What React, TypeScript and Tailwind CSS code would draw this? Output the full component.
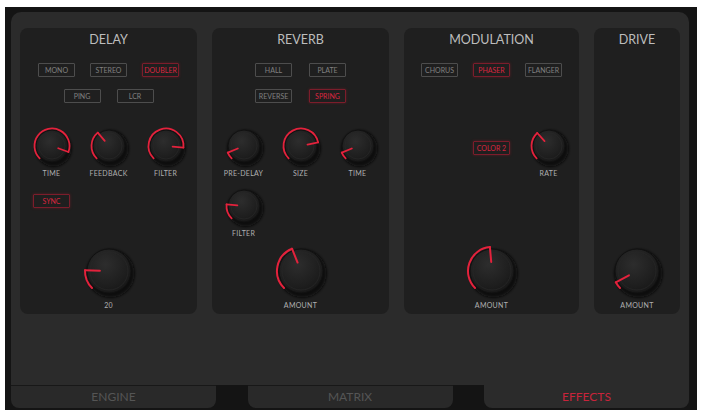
import React from 'react';

const RED = '#e3223c';

// angle in degrees, clockwise from 12 o'clock
const pt = (c: number, r: number, a: number) => {
  const rad = (a * Math.PI) / 180;
  return [c + r * Math.sin(rad), c - r * Math.cos(rad)];
};

const Knob: React.FC<{ value: number; big?: boolean }> = ({ value, big }) => {
  const S = big ? 56 : 40;
  const c = S / 2;
  const r = big ? 24 : 17.5;
  const br = big ? 22 : 16;
  const start = -135;
  const [x0, y0] = pt(c, r, start);
  const [x1, y1] = pt(c, r, value);
  const large = value - start > 180 ? 1 : 0;
  const [px0, py0] = pt(c, r * 0.38, value);
  return (
    <svg width={S} height={S} viewBox={`0 0 ${S} ${S}`} className="overflow-visible block">
      <circle cx={c + 1.5} cy={c + 2.5} r={br + 2} fill="#0a0a0a" filter="url(#knobShadow)" />
      <circle cx={c} cy={c} r={br} fill="url(#knobBody)" stroke="#111111" strokeWidth={1} />
      <circle cx={c} cy={c} r={br - 3} fill="none" stroke="#272727" strokeWidth={0.8} />
      <path
        d={`M ${x0} ${y0} A ${r} ${r} 0 ${large} 1 ${x1} ${y1}`}
        fill="none"
        stroke={RED}
        strokeWidth={big ? 2 : 1.8}
        strokeLinecap="round"
      />
      <line x1={px0} y1={py0} x2={x1} y2={y1} stroke={RED} strokeWidth={big ? 2 : 1.8} strokeLinecap="round" />
    </svg>
  );
};

const KnobCell: React.FC<{ label: string; value: number }> = ({ label, value }) => (
  <div className="flex flex-col items-center">
    <Knob value={value} />
    <div className="mt-[3px] h-[8px] text-[7px] leading-[8px] text-[#b0b0b0] tracking-[0.3px]">{label}</div>
  </div>
);

const BigKnob: React.FC<{ label: string; value: number }> = ({ label, value }) => (
  <div className="mt-auto flex flex-col items-center pb-[5px]">
    <Knob value={value} big />
    <div className="mt-[2px] h-[8px] text-[7px] leading-[8px] text-[#b0b0b0] tracking-[0.3px]">{label}</div>
  </div>
);

const Btn: React.FC<{ label: string; active?: boolean }> = ({ label, active }) => (
  <div
    className={
      active
        ? 'w-[37px] h-[14px] flex items-center justify-center border border-[#7c1d2b] rounded-[1px] text-[7px] leading-none text-[#d9263f] shadow-[0_0_3px_rgba(200,30,50,0.35)]'
        : 'w-[37px] h-[14px] flex items-center justify-center border border-[#4d4d4d] rounded-[1px] text-[7px] leading-none text-[#808080]'
    }
  >
    {label}
  </div>
);

const Title: React.FC<{ children: React.ReactNode }> = ({ children }) => (
  <div className="h-[14px] text-[12.5px] leading-[14px] text-[#bdbdbd]">{children}</div>
);

const Tab: React.FC<{ label: string; active?: boolean }> = ({ label, active }) => (
  <div
    className={
      active
        ? 'w-[205px] h-[23px] rounded-b-[8px] bg-[#2b2b2b] flex items-center justify-center text-[12px] text-[#c8243b]'
        : 'w-[205px] h-[23px] rounded-b-[8px] bg-[#292929] border-t border-[#181818] flex items-center justify-center text-[12px] text-[#555555]'
    }
  >
    {label}
  </div>
);

export default function App() {
  return (
    <div className="w-[702px] h-[416px] bg-white overflow-hidden font-['Lato',sans-serif]">
      <div className="h-0 overflow-hidden">
        <svg width="0" height="0">
          <defs>
            <radialGradient id="knobBody" cx="42%" cy="35%" r="70%">
              <stop offset="0%" stopColor="#2d2d2d" />
              <stop offset="70%" stopColor="#1e1e1e" />
              <stop offset="100%" stopColor="#161616" />
            </radialGradient>
            <filter id="knobShadow" x="-50%" y="-50%" width="200%" height="200%">
              <feGaussianBlur stdDeviation="1.6" />
            </filter>
          </defs>
        </svg>
      </div>

      <div className="mt-[7px] ml-[5px] w-[692px] h-[403px] bg-[#141414] pl-[6px] pt-[5px] flex flex-col">
        {/* Effects panel */}
        <div className="w-[678px] h-[373px] bg-[#2b2b2b] rounded-t-[10px] px-[9px] pt-[16px] flex gap-[15px]">
          {/* DELAY */}
          <div className="w-[177px] h-[286px] bg-[#1f1f1f] rounded-[8px] flex flex-col items-center pt-[5px]">
            <Title>DELAY</Title>
            <div className="mt-[16px] h-[40px] flex flex-col items-center gap-[12px]">
              <div className="flex gap-[15px]">
                <Btn label="MONO" />
                <Btn label="STEREO" />
                <Btn label="DOUBLER" active />
              </div>
              <div className="flex gap-[16px]">
                <Btn label="PING" />
                <Btn label="LCR" />
              </div>
            </div>
            <div className="mt-[23px] grid grid-cols-[57px_57px_57px] justify-items-center">
              <KnobCell label="TIME" value={110} />
              <KnobCell label="FEEDBACK" value={-40} />
              <KnobCell label="FILTER" value={95} />
              <div className="mt-[17px]">
                <Btn label="SYNC" active />
              </div>
            </div>
            <BigKnob label="20" value={-88} />
          </div>

          {/* REVERB */}
          <div className="w-[177px] h-[286px] bg-[#1f1f1f] rounded-[8px] flex flex-col items-center pt-[5px]">
            <Title>REVERB</Title>
            <div className="mt-[16px] h-[40px] flex flex-col items-center gap-[12px]">
              <div className="flex gap-[17px]">
                <Btn label="HALL" />
                <Btn label="PLATE" />
              </div>
              <div className="flex gap-[17px]">
                <Btn label="REVERSE" />
                <Btn label="SPRING" active />
              </div>
            </div>
            <div className="mt-[23px] grid grid-cols-[57px_57px_57px] justify-items-center">
              <KnobCell label="PRE-DELAY" value={-112} />
              <KnobCell label="SIZE" value={78} />
              <KnobCell label="TIME" value={-112} />
              <div className="mt-[9px]">
                <KnobCell label="FILTER" value={-85} />
              </div>
            </div>
            <BigKnob label="AMOUNT" value={-22} />
          </div>

          {/* MODULATION */}
          <div className="w-[175px] h-[286px] bg-[#1f1f1f] rounded-[8px] flex flex-col items-center pt-[5px]">
            <Title>MODULATION</Title>
            <div className="mt-[16px] h-[40px] flex flex-col items-center">
              <div className="flex gap-[15px]">
                <Btn label="CHORUS" />
                <Btn label="PHASER" active />
                <Btn label="FLANGER" />
              </div>
            </div>
            <div className="mt-[23px] grid grid-cols-[57px_57px_57px] justify-items-center">
              <div />
              <div className="mt-[15px]">
                <Btn label="COLOR 2" active />
              </div>
              <KnobCell label="RATE" value={-42} />
            </div>
            <BigKnob label="AMOUNT" value={-5} />
          </div>

          {/* DRIVE */}
          <div className="w-[86px] h-[286px] bg-[#1f1f1f] rounded-[8px] flex flex-col items-center pt-[5px]">
            <Title>DRIVE</Title>
            <BigKnob label="AMOUNT" value={-118} />
          </div>
        </div>

        {/* Tabs */}
        <div className="w-[678px] flex justify-between">
          <Tab label="ENGINE" />
          <Tab label="MATRIX" />
          <Tab label="EFFECTS" active />
        </div>
      </div>
    </div>
  );
}
